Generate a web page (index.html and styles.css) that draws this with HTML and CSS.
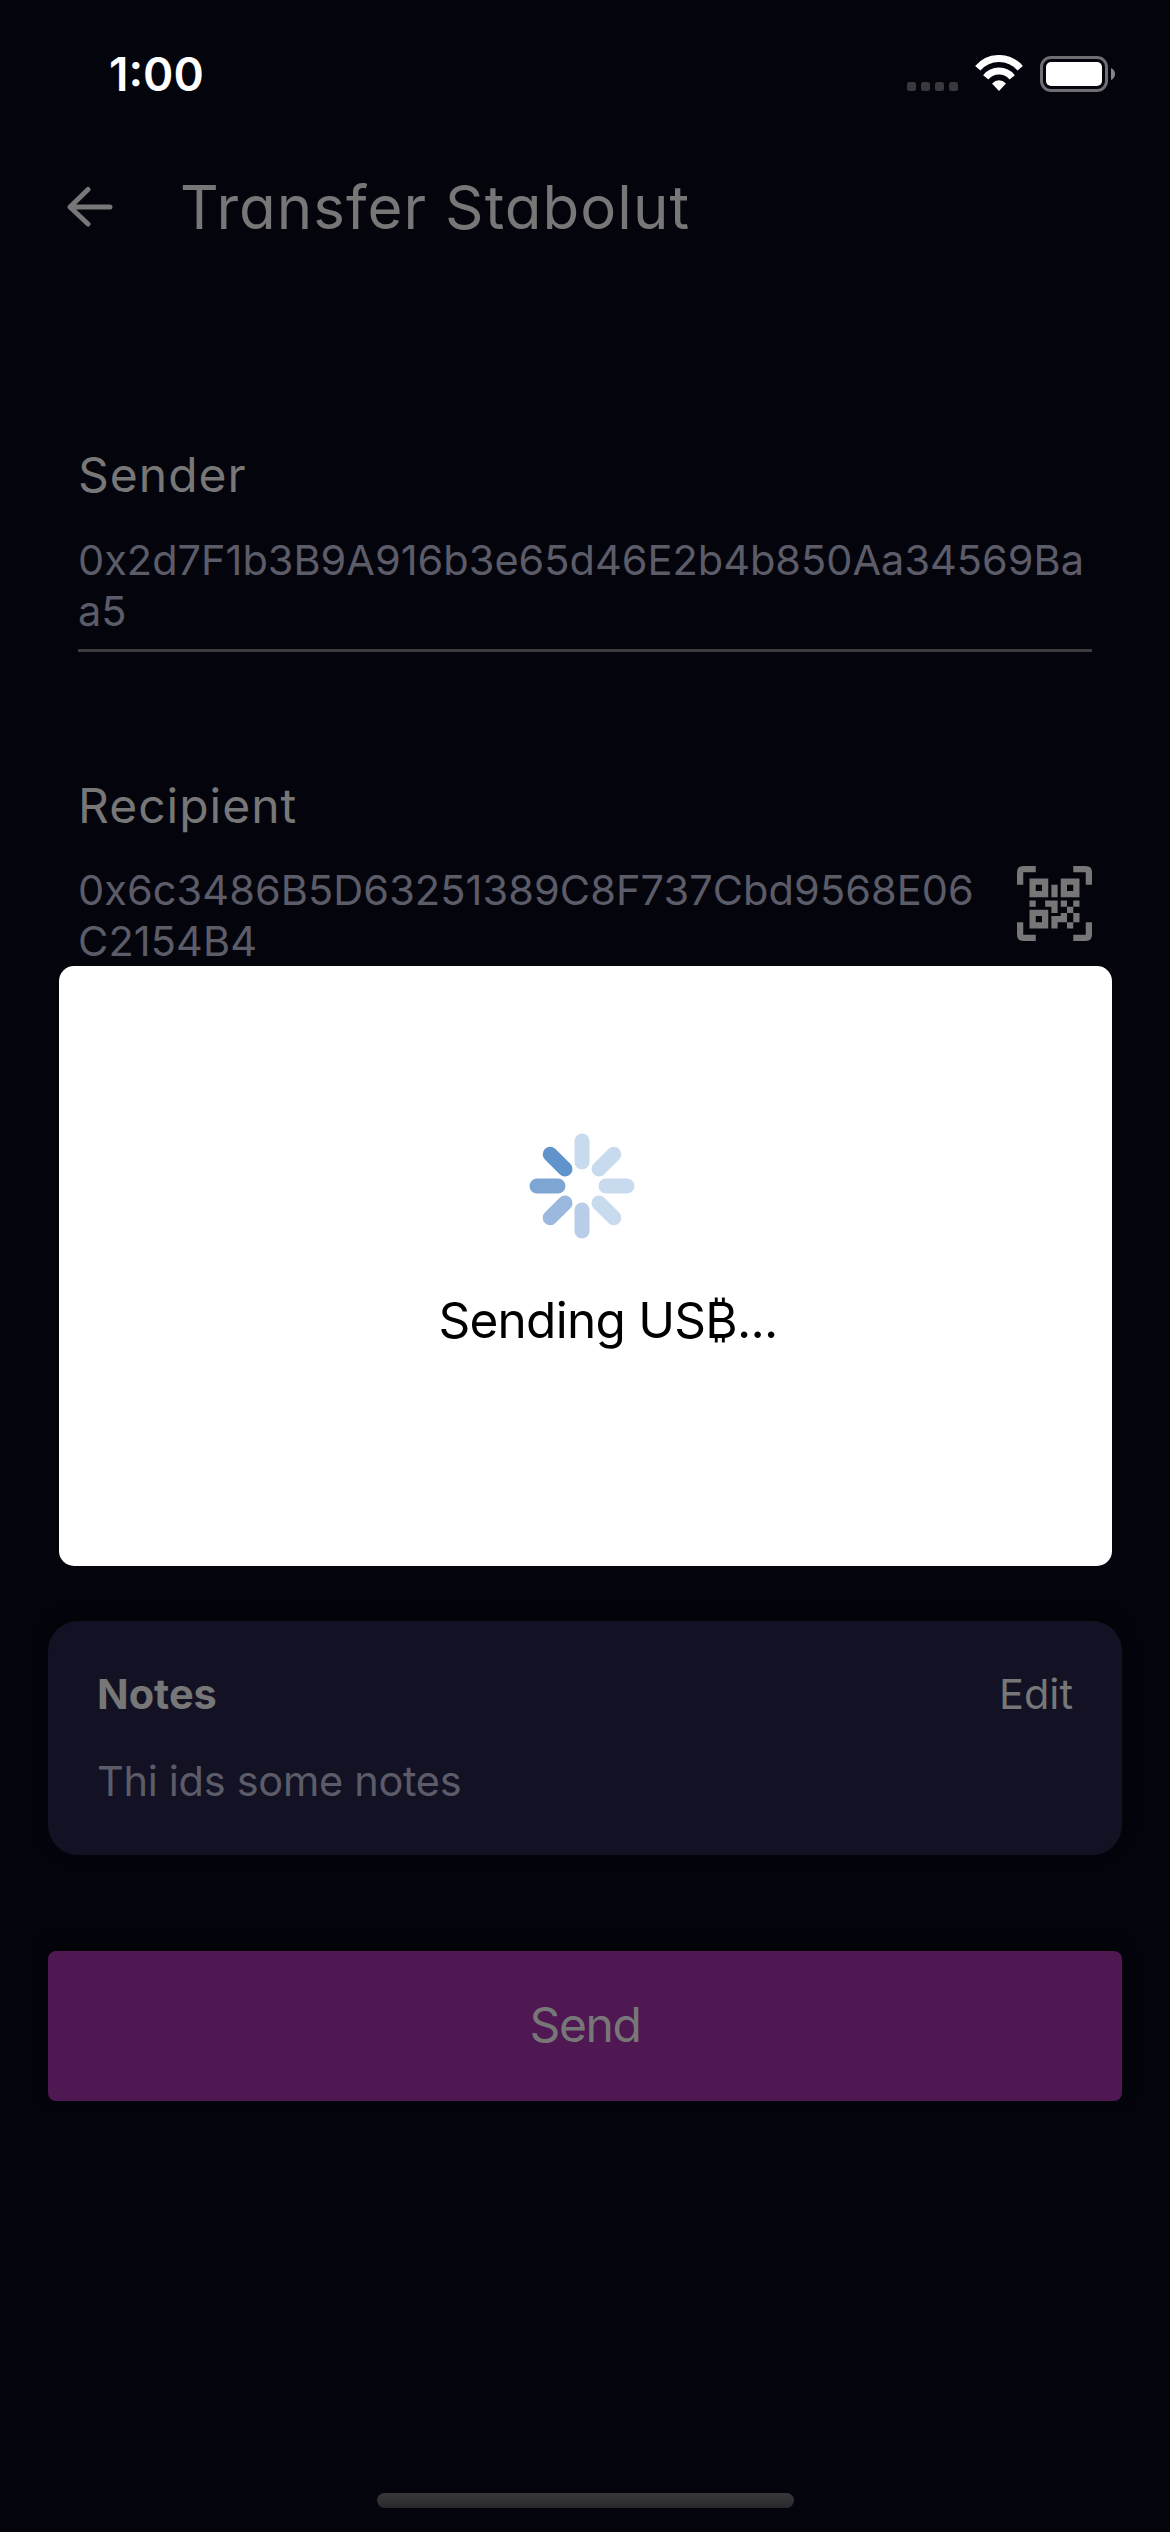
FILE: index.html
```html
<!DOCTYPE html>
<html lang="en">
<head>
<meta charset="utf-8">
<title>Transfer Stabolut</title>
<link rel="stylesheet" href="styles.css">
</head>
<body>
<div class="screen">
  <div class="status">
    <span class="time">1:00</span>
    <div class="indicators">
      <div class="dots"><i></i><i></i><i></i><i></i></div>
      <svg class="wifi" viewBox="0 0 48 36" fill="none" stroke="#fff">
        <path d="M2.8 13.3A27.8 27.8 0 0 1 45.2 13.3" stroke-width="7"/>
        <path d="M10.8 22.3A17 17 0 0 1 37.2 22.3" stroke-width="6.8"/>
        <path d="M17 28.6Q24 21.8 31 28.6L24 36Z" fill="#fff" stroke="none"/>
      </svg>
      <svg class="battery" viewBox="0 0 75 36">
        <rect x="1.5" y="1.5" width="65" height="33" rx="9.5" fill="none" stroke="#6e6e73" stroke-width="3"/>
        <rect x="6" y="6" width="56" height="24" rx="5" fill="#fff"/>
        <path d="M71 12Q75 14 75 18T71 24Z" fill="#85858a"/>
      </svg>
    </div>
  </div>

  <header class="header">
    <svg class="back" viewBox="0 0 46 42" fill="none" stroke="#777" stroke-width="5" stroke-linecap="round" stroke-linejoin="round">
      <path d="M43 21H3M21 3.500L3 21L21 38"/>
    </svg>
    <h1>Transfer Stabolut</h1>
  </header>

  <main class="form">
    <section class="field">
      <h2 class="sender">Sender</h2>
      <div class="row"><p>0x2d7F1b3B9A916b3e65d46E2b4b850Aa34569Ba<br>a5</p></div>
    </section>
    <section class="field recipient">
      <h2>Recipient</h2>
      <div class="row">
        <p>0x6c3486B5D63251389C8F737Cbd9568E06<br>C2154B4</p>
        <svg class="qr" viewBox="0 0 24 24" fill="#777">
          <path d="M1 6V2Q1 1 2 1H6M18 1H22Q23 1 23 2V6M23 18V22Q23 23 22 23H18M6 23H2Q1 23 1 22V18" fill="none" stroke="#777" stroke-width="2"/>
          <path fill-rule="evenodd" d="M4 4h6v6H4ZM6 6v2h2V6ZM14 4h6v6h-6ZM16 6v2h2V6ZM4 14h6v6H4ZM6 16v2h2v-2Z"/>
          <path d="M11 6h2v4h-2ZM4 11h2v2H4ZM9 11h4v4h-2v-2H9ZM14 11h2v2h-2ZM18 11h2v2h-2ZM16 13h2v2h-2ZM14 15h2v3h-3v2h-2v-4h3ZM18 15h2v3h-2ZM16 18h2v2h-2Z"/>
        </svg>
      </div>
    </section>

    <section class="notes">
      <div class="notes-head"><strong>Notes</strong><span>Edit</span></div>
      <p>Thi ids some notes</p>
    </section>
    <button class="send">Send</button>
  </main>

  <div class="home"></div>

  <div class="modal">
    <svg class="spinner" viewBox="-53 -53 106 106" stroke-width="15" stroke-linecap="round">
      <g stroke="#c8daee">
        <path d="M0-45V-24"/>
        <path d="M0-45V-24" transform="rotate(45)"/>
        <path d="M0-45V-24" transform="rotate(90)"/>
        <path d="M0-45V-24" transform="rotate(135)"/>
      </g>
      <path d="M0-45V-24" transform="rotate(180)" stroke="#b8cde7"/>
      <path d="M0-45V-24" transform="rotate(225)" stroke="#9bb9de"/>
      <path d="M0-45V-24" transform="rotate(270)" stroke="#7ea6d3"/>
      <path d="M0-45V-24" transform="rotate(315)" stroke="#6094cb"/>
    </svg>
    <p>Sending US₿...</p>
  </div>
</div>
</body>
</html>
```

FILE: styles.css
```css
* { box-sizing: border-box; margin: 0; padding: 0; }

body {
  background: #04040d;
  font-family: Inter, "Liberation Sans", sans-serif;
  color: #777;
}

.screen {
  position: relative;
  width: 1170px;
  height: 2532px;
  display: flex;
  flex-direction: column;
  overflow: hidden;
  white-space: nowrap;
}

.status {
  height: 167px;
  padding: 46px 55px 0 109px;
  display: flex;
  justify-content: space-between;
  align-items: flex-start;
}
.time { font-size: 46px; font-weight: 600; line-height: 56px; color: #fff; }
.indicators { display: flex; align-items: flex-end; height: 46px; }
.dots { display: flex; gap: 5px; margin: 0 17px 1px 0; }
.dots i { width: 9px; height: 9px; border-radius: 2.5px; background: #39393d; }
.wifi { width: 48px; height: 36px; margin: 0 17px 1px 0; }
.battery { width: 75px; height: 36px; }

.header { display: flex; align-items: center; height: 80px; padding-left: 67px; }
.back { width: 46px; height: 42px; margin-right: 67px; }
h1, h2 { font-weight: 400; font-feature-settings: "cv11"; }
h1 { font-size: 60px; line-height: 80px; letter-spacing: 1.05px; }

.form { display: flex; flex-direction: column; padding: 198px 48px 0; }
.field { margin: 0 30px; }
.recipient { margin-top: 124px; }
h2 { font-size: 48px; line-height: 60px; margin-bottom: 30px; letter-spacing: 1px; }
.recipient h2 { margin-bottom: 29px; }
.row {
  display: flex;
  justify-content: space-between;
  align-items: flex-start;
  padding-bottom: 12px;
  border-bottom: 3px solid #3c3c3c;
}
.row p { font-size: 41.500px; line-height: 51px; color: #5c5c69; }
.recipient .row p { letter-spacing: 0.08px; }
.qr { width: 75px; height: 75px; margin-top: 1px; }

.notes {
  margin-top: 639px;
  height: 234px;
  padding: 48px 49px;
  border-radius: 30px;
  background: #121224;
  box-shadow: 0 -4px 14px #030406;
  font-size: 41.500px;
  line-height: 50px;
}
.notes-head { display: flex; justify-content: space-between; margin-bottom: 37px; }
.notes-head strong { font-weight: 700; }
.notes p { color: #5c5c69; letter-spacing: -0.3px; }

.send {
  margin-top: 96px;
  height: 150px;
  border: 0;
  border-radius: 8px;
  background: #4f1853;
  box-shadow: 0 -4px 14px #030406;
  color: #777;
  font: 400 48px/147px Inter, "Liberation Sans", sans-serif;
  letter-spacing: -1.4px;
  padding-bottom: 3px;
}

.home {
  width: 417px;
  height: 15px;
  margin: auto auto 24px 377px;
  border-radius: 8px;
  background: linear-gradient(#38383a, #29292d);
}

.modal {
  position: absolute;
  left: 58.500px;
  top: 966px;
  width: 1053px;
  height: 600px;
  padding-top: 166.500px;
  border-radius: 15px;
  background: #fff;
  color: #000;
}
.spinner { display: block; width: 106px; height: 106px; margin: 0 0 51px 470px; }
.modal p { font-size: 49.500px; line-height: 60px; margin-left: 380px; letter-spacing: -0.75px; }
```
